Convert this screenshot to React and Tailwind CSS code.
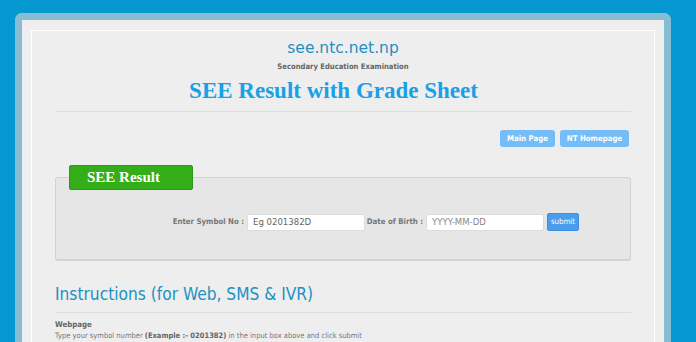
export default function App() {
  const sans = { fontFamily: '"DejaVu Sans", Verdana, sans-serif' };
  const cond = { fontFamily: '"DejaVu Sans Condensed", "DejaVu Sans", sans-serif', fontStretch: 'condensed' };
  return (
    <div className="w-[696px] h-[342px] overflow-hidden bg-[#0597cf] pt-[13px] pl-[15px] pr-[25px]">
      <div className="h-[400px] border-[7px] border-b-0 border-[#87bdd2] rounded-t-[7px] bg-[#eeeeee] px-[9px] pt-[10px]">
        <div className="h-[400px] border border-white px-[23px]" style={sans}>
          <div className="flex flex-col items-center">
            <div className="mt-[7px] h-[20px] leading-[20px] text-[15.5px] text-[#2191c3]">see.ntc.net.np</div>
            <div className="mt-[2px] h-[14px] leading-[14px] text-[7.6px] font-bold text-[#666666]" style={cond}>Secondary Education Examination</div>
            <div className="mt-[3px] h-[28px] leading-[28px] text-[23px] font-bold text-[#19a0e6] font-['Liberation_Serif'] pr-[19px]">SEE Result with Grade Sheet</div>
          </div>
          <div className="mt-[6px] border-t border-[#dddddd]"></div>
          <div className="mt-[18px] flex justify-end gap-[5px] pr-[2px]" style={cond}>
            <div className="h-[17px] w-[55px] rounded-[3px] bg-[#74bdf6] text-white text-[7.8px] font-bold flex items-center justify-center">Main Page</div>
            <div className="h-[17px] w-[69px] rounded-[3px] bg-[#74bdf6] text-white text-[7.8px] font-bold flex items-center justify-center">NT Homepage</div>
          </div>
          <div className="relative mt-[30px] h-[84px] rounded-[3px] border border-[#d2d2d2] border-b-2 bg-[#e6e6e6]">
            <div className="absolute left-[13px] top-[-13px] h-[25px] w-[124px] rounded-[2px] border border-[#2c9a14] bg-[#33ad18] text-white font-bold text-[15px] leading-[23px] pl-[17px] font-['Liberation_Serif']">SEE Result</div>
            <div className="mt-[35px] flex items-center text-[7.8px] font-bold text-[#777777]" style={cond}>
              <span className="w-[191px] text-right pr-[3px]">Enter Symbol No :</span>
              <div className="h-[17px] w-[118px] rounded-[2px] bg-white border border-[#dcdcdc] flex items-center pl-[5px] text-[9.5px] font-normal text-[#666666]" style={sans}>Eg 0201382D</div>
              <span className="w-[61px] text-right pr-[3px]">Date of Birth :</span>
              <div className="h-[17px] w-[118px] rounded-[2px] bg-white border border-[#dcdcdc] flex items-center pl-[5px] text-[9.5px] font-normal text-[#888888]" style={sans}>YYYY-MM-DD</div>
              <div className="ml-[3px] h-[18px] w-[32px] rounded-[2px] bg-[#4a9ded] border border-[#3d8fe0] text-white text-[7.8px] font-normal flex items-center justify-center">submit</div>
            </div>
          </div>
          <div className="mt-[21px] h-[24px] leading-[24px] text-[17.2px] text-[#2191c3]" style={cond}>Instructions (for Web, SMS &amp; IVR)</div>
          <div className="mt-[6px] border-t border-[#dddddd]"></div>
          <div style={cond}>
            <div className="mt-[7px] text-[7.8px] font-bold text-[#666666] leading-[10px]">Webpage</div>
            <div className="text-[7.5px] text-[#777777] leading-[11px]">
              Type your symbol number <b className="text-[#666666]">(Example :- 0201382)</b> in the input box above and click submit
            </div>
            <div className="text-[7.5px] text-[#777777] leading-[11px]">You can also check your result by SMS</div>
          </div>
        </div>
      </div>
    </div>
  );
}
